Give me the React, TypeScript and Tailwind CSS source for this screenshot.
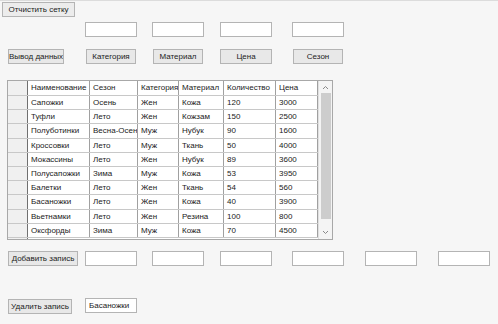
import React from 'react'

const rows = [
  ['Сапожки', 'Осень', 'Жен', 'Кожа', '120', '3000'],
  ['Туфли', 'Лето', 'Жен', 'Кожзам', '150', '2500'],
  ['Полуботинки', 'Весна-Осень', 'Муж', 'Нубук', '90', '1600'],
  ['Кроссовки', 'Лето', 'Муж', 'Ткань', '50', '4000'],
  ['Мокассины', 'Лето', 'Жен', 'Нубук', '89', '3600'],
  ['Полусапожки', 'Зима', 'Муж', 'Кожа', '53', '3950'],
  ['Балетки', 'Лето', 'Жен', 'Ткань', '54', '560'],
  ['Басаножки', 'Лето', 'Жен', 'Кожа', '40', '3900'],
  ['Вьетнамки', 'Лето', 'Жен', 'Резина', '100', '800'],
  ['Оксфорды', 'Зима', 'Муж', 'Кожа', '70', '4500'],
]

const headers = ['Наименование', 'Сезон', 'Категория', 'Материал', 'Количество', 'Цена']
const cols = 'grid grid-cols-[20px_62px_48px_41px_45px_52px_42px]'

function Btn({ label, w, className = '' }: { label: string; w: string; className?: string }) {
  return (
    <button
      className={`${w} ${className} h-[15px] shrink-0 overflow-hidden whitespace-nowrap border border-[#b4b4b4] bg-[#e8e8e8] px-0 text-center leading-[13px] text-[#222]`}
    >
      {label}
    </button>
  )
}

function Box({ value = '', className = '' }: { value?: string; className?: string }) {
  return (
    <div
      className={`${className} h-[15px] w-[52px] shrink-0 whitespace-nowrap border border-[#b4b4b4] bg-white pl-[3px] leading-[13px] text-[#222]`}
    >
      {value}
    </div>
  )
}

export default function App() {
  return (
    <div
      className="flex h-[324px] w-[498px] flex-col overflow-hidden border-t border-[#dcdcdc] bg-[#f6f6f6] text-[8px] text-[#222]"
      style={{ fontFamily: '"Liberation Sans", Arial, sans-serif' }}
    >
      <div className="flex pl-[2px] pt-[1px]">
        <Btn label="Отчистить сетку" w="w-[73px]" className="bg-[#ececec]" />
      </div>

      <div className="mt-[5px] flex pl-[85px]">
        <Box />
        <Box className="ml-[15px]" />
        <Box className="ml-[16px]" />
        <Box className="ml-[20px]" />
      </div>

      <div className="mt-[12px] flex pl-[8px]">
        <Btn label="Вывод данных" w="w-[56px]" />
        <Btn label="Категория" w="w-[50px]" className="ml-[22px]" />
        <Btn label="Материал" w="w-[50px]" className="ml-[17px]" />
        <Btn label="Цена" w="w-[52px]" className="ml-[17px]" />
        <Btn label="Сезон" w="w-[50px]" className="ml-[21px]" />
      </div>

      <div className="ml-[7px] mt-[16px] flex h-[160px] w-[326px] border border-[#a8a8a8] bg-white">
        <div className="flex w-[310px] flex-col">
          <div className={`${cols} h-[15px] border-b border-[#c8c8c8]`}>
            <div className="border-r border-[#707070] bg-[#f0f0f0]" />
            {headers.map((h) => (
              <div key={h} className="overflow-hidden whitespace-nowrap border-r border-[#a0a0a0] pl-[3px] leading-[14px]">
                {h}
              </div>
            ))}
          </div>
          {rows.map((r, i) => (
            <div key={i} className={`${cols} h-[14.2px] border-b border-[#c8c8c8]`}>
              <div className="border-r border-[#707070] bg-[#f0f0f0]" />
              {r.map((c, j) => (
                <div key={j} className="overflow-hidden whitespace-nowrap border-r border-[#a0a0a0] pl-[3px] leading-[13px]">
                  {c}
                </div>
              ))}
            </div>
          ))}
          <div className="flex flex-1">
            <div className="w-[20px] border-r border-[#707070] bg-[#f0f0f0]" />
          </div>
        </div>
        <div className="flex w-[14px] flex-col items-center border-l border-[#e0e0e0] bg-[#f4f4f4] pt-[4px]">
          <svg width="7" height="5" viewBox="0 0 7 5">
            <path d="M1 4 L3.5 1.5 L6 4" fill="none" stroke="#888" strokeWidth="1" />
          </svg>
          <div className="mt-[3px] h-[126px] w-[10px] bg-[#cdcdcd]" />
          <div className="flex-1" />
          <svg width="7" height="5" viewBox="0 0 7 5" className="mb-[4px]">
            <path d="M1 1 L3.5 3.5 L6 1" fill="none" stroke="#888" strokeWidth="1" />
          </svg>
        </div>
      </div>

      <div className="mt-[11px] flex pl-[8px]">
        <Btn label="Добавить запись" w="w-[70px]" />
        <Box className="ml-[7px]" />
        <Box className="ml-[15px]" />
        <Box className="ml-[16px]" />
        <Box className="ml-[20px]" />
        <Box className="ml-[21px]" />
        <Box className="ml-[21px]" />
      </div>

      <div className="mt-[32px] flex items-start pl-[8px]">
        <Btn label="Удалить запись" w="w-[64px]" className="mt-[1px]" />
        <Box value="Басаножки" className="ml-[13px]" />
      </div>
    </div>
  )
}
